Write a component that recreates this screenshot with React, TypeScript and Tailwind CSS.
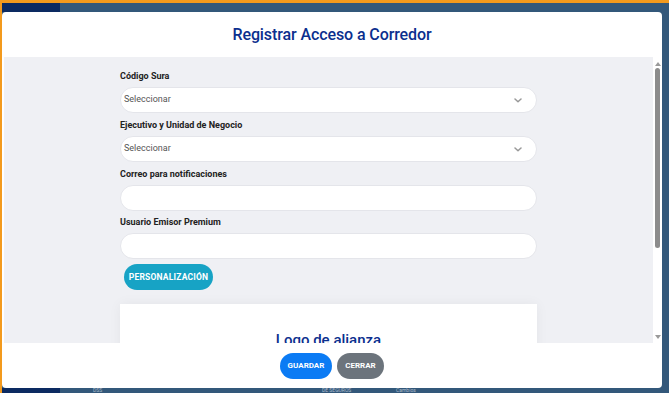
import React from "react";

function Chevron() {
  return (
    <svg width="8" height="5" viewBox="0 0 8 5" fill="none">
      <path d="M1 1l3 2.8L7 1" stroke="#999" strokeWidth="1.5" strokeLinecap="round" strokeLinejoin="round" />
    </svg>
  );
}

function Label({ children }: { children: React.ReactNode }) {
  return (
    <div className="h-[14px] leading-[14px] text-[9px] font-bold text-[#222]">{children}</div>
  );
}

function SelectBox() {
  return (
    <div className="h-[26px] rounded-full bg-white border border-[#e4e5ea] flex items-center justify-between pl-[3px] pr-[14px]">
      <span className="text-[9px] text-[#555]">Seleccionar</span>
      <Chevron />
    </div>
  );
}

function InputBox() {
  return <div className="h-[26px] rounded-full bg-white border border-[#e4e5ea]" />;
}

export default function App() {
  return (
    <div
      className="relative w-[669px] h-[393px] overflow-hidden bg-[#33587a]"
      style={{ fontFamily: "Roboto, 'Noto Sans', sans-serif" }}
    >
      {/* page behind */}
      <div className="h-[3px] bg-[#f39a1d]" />
      <div className="flex h-[9px]">
        <div className="w-[58px] ml-[2px] bg-[#0c2a61]" />
        <div className="flex-1 bg-[#33587a]" />
      </div>
      <div className="absolute left-0 top-0 bottom-0 w-[2px] bg-[#f39a1d]" />
      <div className="absolute left-0 bottom-0 right-0 h-[5px] flex">
        <div className="w-[58px] h-full bg-[#0c2a61] ml-[2px]" />
        <div className="flex-1 relative text-[5px] text-[#aebccb] leading-[5px]">
          <span className="absolute left-[33px] top-0">DSS</span>
          <span className="absolute left-[262px] top-0">DE SEGUROS</span>
          <span className="absolute left-[336px] top-0">Cambios</span>
        </div>
      </div>

      {/* modal */}
      <div className="absolute left-[2px] top-[12px] w-[660px] h-[376px] bg-white rounded-[4px] flex flex-col overflow-hidden">
        <div className="h-[45px] flex items-center justify-center pt-[1px]">
          <h1 className="text-[16px] font-medium text-[#0b2f8e] tracking-[-0.1px]">Registrar Acceso a Corredor</h1>
        </div>
        <div className="h-[286px] flex pl-[2px]">
          <div className="flex-1 bg-[#eff0f4] overflow-hidden">
            <div className="w-[417px] mx-auto pt-[12px]">
              <Label>Código Sura</Label>
              <div className="mt-[4px]"><SelectBox /></div>
              <div className="mt-[5px]"><Label>Ejecutivo y Unidad de Negocio</Label></div>
              <div className="mt-[4px]"><SelectBox /></div>
              <div className="mt-[5px]"><Label>Correo para notificaciones</Label></div>
              <div className="mt-[4px]"><InputBox /></div>
              <div className="mt-[4px]"><Label>Usuario Emisor Premium</Label></div>
              <div className="mt-[4px]"><InputBox /></div>
              <button className="block mt-[5px] ml-[4px] h-[26px] w-[89px] rounded-full bg-[#17a3c5] text-white text-[8.5px] font-bold tracking-[0.2px]">
                PERSONALIZACIÓN
              </button>
              <div className="mt-[14px] bg-white h-[120px] shadow-[0_0_12px_rgba(0,0,0,0.05)] pt-[25px] text-center">
                <div className="text-[15px] font-medium text-[#0b2f8e]">Logo de alianza</div>
              </div>
            </div>
          </div>
          <div className="w-[9px] flex flex-col items-center">
            <div className="mt-[5px] w-0 h-0 border-l-[3px] border-r-[3px] border-b-[4px] border-l-transparent border-r-transparent border-b-[#9a9a9a]" />
            <div className="mt-[2px] w-[5px] h-[180px] rounded-full bg-[#8c8c8c]" />
            <div className="flex-1" />
            <div className="mb-[4px] w-0 h-0 border-l-[3px] border-r-[3px] border-t-[4px] border-l-transparent border-r-transparent border-t-[#9a9a9a]" />
          </div>
        </div>
        <div className="flex-1 flex items-start justify-center gap-[5px] pt-[10px]">
          <button className="h-[26px] w-[52px] rounded-full bg-[#0b7bf4] text-white text-[8px] font-bold">GUARDAR</button>
          <button className="h-[26px] w-[47px] rounded-full bg-[#6c747c] text-white text-[8px] font-bold">CERRAR</button>
        </div>
      </div>
    </div>
  );
}
